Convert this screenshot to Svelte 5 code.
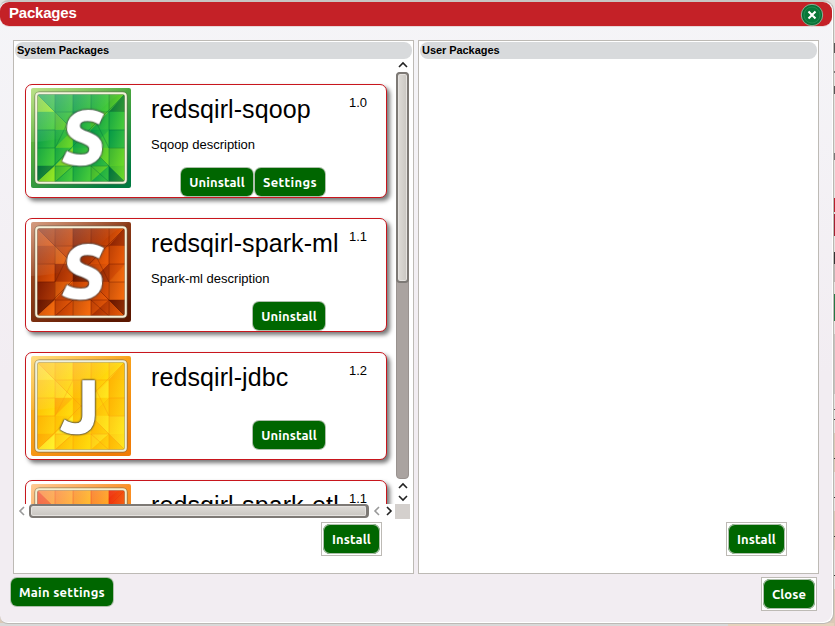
<script>
  const packages = [
    { name: 'redsqirl-sqoop', version: '1.0', description: 'Sqoop description', letter: 'S', theme: 'green', settings: true, height: 114 },
    { name: 'redsqirl-spark-ml', version: '1.1', description: 'Spark-ml description', letter: 'S', theme: 'brown', height: 114 },
    { name: 'redsqirl-jdbc', version: '1.2', description: '', letter: 'J', theme: 'yellow', height: 108, compact: true },
    { name: 'redsqirl-spark-etl', version: '1.1', description: '', letter: '', theme: 'orange', height: 114 }
  ];

  // border start / end, frame line, then six facet shades from light to dark
  const themes = {
    green: ['#8fcf3c', '#007a40', '#f3f3dc', '#8fe524', '#56d02c', '#22bd44', '#07a94c', '#038f48', '#00703c'],
    brown: ['#b75a2c', '#5b1700', '#f6f0d8', '#f2690d', '#e25206', '#cc4203', '#ad3002', '#8b1f02', '#631300'],
    yellow: ['#ffc62e', '#f07c06', '#eef0dc', '#fff02a', '#ffe018', '#ffd000', '#ffc000', '#ffb000', '#fb970c'],
    orange: ['#ffa64c', '#f57a00', '#f3efd0', '#ffc21c', '#ffad22', '#ff9a2a', '#fb8428', '#f76416', '#ee2d0c']
  };

  // Two shades for every cell of the 5 by 5 mosaic; letters index the shades
  const mosaics = {
    green: ['ad', 'dd', 'dd', 'cc', 'bf', 'cc', 'bc', 'dd', 'bd', 'cc', 'dd', 'cb', 'de', 'dc', 'dd', 'cc', 'ca', 'cd', 'db', 'bb', 'fa', 'bc', 'cc', 'bd', 'fb'],
    brown: ['ce', 'dd', 'ee', 'dd', 'be', 'dd', 'ac', 'ee', 'cb', 'bb', 'cc', 'dd', 'fd', 'be', 'ba', 'ee', 'ac', 'be', 'bc', 'aa', 'fa', 'bc', 'aa', 'bd', 'bf'],
    yellow: ['bd', 'cc', 'dd', 'cc', 'be', 'cc', 'bc', 'dd', 'cb', 'dd', 'cc', 'ec', 'dd', 'cd', 'dd', 'dd', 'ca', 'cd', 'db', 'bb', 'ea', 'bd', 'cc', 'bd', 'db'],
    orange: ['fd', 'cc', 'bb', 'cc', 'ff', 'dd', 'bc', 'bb', 'cd', 'ee', 'cc', 'cc', 'dd', 'cc', 'ee', 'dd', 'ba', 'cc', 'bb', 'dd', 'fa', 'dd', 'cc', 'dd', 'ff']
  };
  const stops = [6, 24, 42, 60, 78, 94];
  const facetsOf = (theme) =>
    mosaics[theme].flatMap((pair, n) => {
      const r = Math.floor(n / 5);
      const c = n % 5;
      const [x0, x1, y0, y1] = [stops[c], stops[c + 1], stops[r], stops[r + 1]];
      const points = r === c
        ? [`${x0},${y0} ${x0},${y1} ${x1},${y1}`, `${x0},${y0} ${x1},${y0} ${x1},${y1}`]
        : [`${x0},${y0} ${x1},${y0} ${x0},${y1}`, `${x1},${y0} ${x1},${y1} ${x0},${y1}`];
      const shade = (i) => pair.charCodeAt(i) - 94;
      if (pair[0] === pair[1]) return [{ points: `${x0},${y0} ${x1},${y0} ${x1},${y1} ${x0},${y1}`, shade: shade(0) }];
      return points.map((p, i) => ({ points: p, shade: shade(i) }));
    });
</script>

{#snippet tile(letter, theme)}
  {@const t = themes[theme]}
  <svg class="tile" viewBox="0 0 100 100">
    <defs>
      <linearGradient id="edge-{theme}" x1="0" y1="0" x2="0.75" y2="1">
        <stop offset="0" stop-color={t[0]} /><stop offset="1" stop-color={t[1]} />
      </linearGradient>
      <linearGradient id="shade-{theme}" x1="0" y1="0" x2="1" y2=".3">
        <stop offset="0" stop-color={t[8]} stop-opacity=".3" /><stop offset="1" stop-color={t[3]} stop-opacity=".3" />
      </linearGradient>
      <linearGradient id="gloss-{theme}" x1="0" y1="0" x2="1" y2=".8">
        <stop offset="0" stop-color="#fff" stop-opacity=".4" /><stop offset=".65" stop-color="#fff" stop-opacity="0" />
      </linearGradient>
    </defs>
    <rect width="100" height="100" rx="2" fill="url(#edge-{theme})" />
    {#each facetsOf(theme) as f}
      <polygon points={f.points} fill={t[f.shade]} stroke={t[f.shade]} stroke-width=".4" />
      <polygon points={f.points} fill="url(#shade-{theme})" />
    {/each}
    <path d="M6 6l88 88M94 6L6 94M24 24h54v54H24zM24 6v18M42 6v18M60 6v18M78 6v18M24 78v16M42 78v16M60 78v16M78 78v16M6 42h18M6 60h18M78 42h16M78 60h16M42 24l-18 36M60 24l18 36M60 78l18 16M42 78L24 94" fill="none" stroke={t[8]} stroke-opacity=".5" stroke-width=".8" />
    <path d="M0 0H100C72 12 64 34 42 47Q20 54 0 54Z" fill="url(#gloss-{theme})" />
    <rect x="5" y="5" width="90" height="90" rx="3.500" fill="none" stroke="#665" stroke-opacity=".5" stroke-width="3.600" />
    <rect x="5.200" y="5.200" width="89.600" height="89.600" rx="3" fill="none" stroke={t[2]} stroke-width="2" />
    {#if letter}
      <g transform={letter === 'S' ? 'translate(50.500 75.500) skewX(-6)' : 'translate(49 75.500)'}>
        <text class="halo" text-anchor="middle">{letter}</text>
      </g>
    {/if}
  </svg>
{/snippet}

{#snippet arrow(dir, faded)}
  <svg class="arrow" class:faded viewBox="0 0 12 12">
    <path d={{ up: 'M2 8l4-4 4 4', down: 'M2 4l4 4 4-4', left: 'M8 2L4 6l4 4', right: 'M4 2l4 4-4 4' }[dir]} />
  </svg>
{/snippet}

<div class="window">
  <header>
    <h1>Packages</h1>
    <button class="dismiss" aria-label="Close window">
      <svg viewBox="0 0 24 24">
        <defs><radialGradient id="orb"><stop offset="0" stop-color="#087532" /><stop offset=".8" stop-color="#08793b" /><stop offset="1" stop-color="#075c2a" /></radialGradient></defs>
        <circle cx="12" cy="12" r="10.700" fill="url(#orb)" stroke="#8bb497" />
        <circle cx="12" cy="12" r="8" fill="none" stroke="#329259" stroke-opacity=".6" />
        <path d="M8.500 8.500l7 7M15.500 8.500l-7 7" stroke="#fff" stroke-width="2.100" />
      </svg>
    </button>
  </header>

  <main>
    <section>
      <h2>System Packages</h2>
      <div class="scroller">
        <div class="row">
          <div class="list">
            {#each packages as p}
              <article class:compact={p.compact} style="height: {p.height}px">
                {@render tile(p.letter, p.theme)}
                <div class="info">
                  <div class="title"><h3>{p.name}</h3><span>{p.version}</span></div>
                  <p>{p.description}</p>
                  <div class="actions">
                    <button class="btn uninstall">Uninstall</button>{#if p.settings}<button class="btn settings">Settings</button>{/if}
                  </div>
                </div>
              </article>
            {/each}
          </div>
          <div class="vbar">
            {@render arrow('up')}
            <div class="vtrack"><div class="vthumb"></div></div>
            {@render arrow('up')}
            {@render arrow('down')}
          </div>
        </div>
        <div class="hbar">
          {@render arrow('left', true)}
          <div class="hthumb"></div>
          {@render arrow('left', true)}
          {@render arrow('right')}
          <div class="corner"></div>
        </div>
      </div>
      <div class="install"><span class="box"><button class="btn inst">Install</button></span></div>
    </section>
    <section>
      <h2>User Packages</h2>
      <div class="scroller"></div>
      <div class="install"><span class="box"><button class="btn inst">Install</button></span></div>
    </section>
  </main>

  <footer>
    <button class="btn main-settings">Main settings</button>
    <span class="box"><button class="btn close">Close</button></span>
  </footer>
</div>

<style>
  :global(body) {
    margin: 0;
    width: 835px;
    height: 626px;
    overflow: hidden;
    background:
      linear-gradient(90deg, #d9d9d9 0 728px, #e5d2bd 728px) 0 623px / 834px 3px no-repeat,
      linear-gradient(#e4e3e0 0 43px, #555 43px 53px, #e4e3e0 53px 71px, #777 71px 73px, #e4e3e0 73px 86px, #555 86px 94px, #e4e3e0 94px 153px, #777 153px 160px, #e4e3e0 160px 198px, #b71f2d 198px 212px, #ddd 212px 214px, #a31f31 214px 236px, #e4e3e0 236px 252px, #333 252px 264px, #bbb5b3 264px 282px, #e4e3e0 282px 294px, #267945 294px 321px, #e4e3e0 321px 334px, #c5c3bf 334px 394px, #e4e3e0 394px 409px, #555 409px 410px, #e4e3e0 410px 419px, #333 419px 420px, #e4e3e0 420px 433px, #dac9b7 433px 458px, #333 458px 459px, #dac9b7 459px 472px, #e4e3e0 472px 497px, #333 497px 498px, #e4e3e0 498px 511px, #dac9b7 511px 536px, #333 536px 537px, #dac9b7 537px 550px, #e4e3e0 550px 575px, #333 575px 576px, #e4e3e0 576px 589px, #dac9b7 589px);
    font-family: 'Liberation Sans', Arial, sans-serif;
    color: #000;
  }
  h1, h2, h3, p { margin: 0; }
  button { border: 0; padding: 0; margin: 0; }
  .window {
    box-sizing: border-box;
    width: 834px;
    height: 624px;
    display: flex;
    flex-direction: column;
    background: linear-gradient(#f5f5f8, #f2edf2 60%, #f2edf2);
    border-right: 1px solid #bab8b3;
    border-bottom: 1px solid #bdbab6;
    border-top: 2px solid #c8c5c2;
    border-radius: 8px 10px 10px 8px;
    box-shadow: inset -1px -1px #fff;
  }
  header {
    box-sizing: border-box;
    width: 832px;
    height: 24px;
    flex: none;
    display: flex;
    justify-content: space-between;
    padding: 0 8px 0 9px;
    background: #c42127;
    border-radius: 9px;
    box-shadow: 0 1px #e8d5d7;
  }
  h1 { font-size: 15px; line-height: 22px; color: #fff; letter-spacing: -.2px; }
  .dismiss { width: 24px; height: 24px; margin-top: 1px; background: none; }
  .dismiss svg { display: block; width: 24px; height: 24px; }
  main { display: flex; gap: 4px; padding: 14px 0 0 13px; }
  section {
    box-sizing: border-box;
    width: 401px;
    height: 534px;
    border: 1px solid #bdbab5;
    background: #fff;
    display: flex;
    flex-direction: column;
  }
  h2 {
    height: 17px;
    margin: 1px 1px 0;
    padding-left: 2px;
    font-size: 11px;
    line-height: 17px;
    letter-spacing: -.06px;
    background: #d8dadc;
    border-radius: 8px;
  }
  .scroller { height: 460px; }
  .row { display: flex; height: 445px; }
  .list {
    box-sizing: border-box;
    width: 381px;
    height: 445px;
    overflow: hidden;
    padding: 25px 0 0 11px;
    display: flex;
    flex-direction: column;
    gap: 20px;
  }
  article {
    box-sizing: border-box;
    width: 362px;
    flex: none;
    display: flex;
    padding: 3px 5px;
    border: 1px solid #c8161d;
    border-radius: 7px;
    background: #fff;
    box-shadow: 3px 3px 4px #777;
  }
  .tile { width: 100px; height: 100px; flex: none; }
  .halo {
    font: 700 73px Ubuntu, 'Open Sans', sans-serif;
    fill: #fff;
    stroke: #fff;
    stroke-width: 2.5;
    filter: drop-shadow(0 0 1px #333) drop-shadow(0 0 .5px #555);
  }
  .info { width: 216px; margin-left: 20px; display: flex; flex-direction: column; }
  .title { display: flex; flex: none; justify-content: space-between; white-space: nowrap; height: 46px; }
  h3 { font-size: 25px; font-weight: 400; line-height: 43px; letter-spacing: .09px; }
  .title span { font-size: 13px; line-height: 29px; }
  p { height: 24px; flex: none; font-size: 13px; line-height: 22px; }
  .actions { display: flex; flex: none; justify-content: flex-end; gap: 2px; padding: 9px 42px 0 0; }
  .compact .actions { padding-top: 0; margin-top: -4px; }
  .compact .title { height: 44px; }
  .btn {
    box-sizing: border-box;
    height: 28px;
    flex: none;
    display: block;
    background: #060;
    color: #fff;
    border-radius: 6px;
    box-shadow: 0 0 0 1px #aebfab;
    font: 700 13px/29px Ubuntu, 'Noto Sans', 'Open Sans', sans-serif;
    text-align: center;
    white-space: nowrap;
  }
  .actions .btn { margin-top: 1px; }
  .uninstall { width: 72px; letter-spacing: .12px; }
  .settings { width: 70px; letter-spacing: .35px; }
  .inst { width: 57px; height: 30px; letter-spacing: .12px; }
  .main-settings { width: 102px; letter-spacing: .25px; }
  .close { width: 52px; height: 30px; letter-spacing: .1px; }
  .vbar { width: 15px; display: flex; flex-direction: column; align-items: center; }
  .arrow { width: 12px; height: 12px; flex: none; fill: none; stroke: #222; stroke-width: 1.6; }
  .faded { stroke: #999; }
  .vtrack { box-sizing: border-box; width: 13px; height: 407px; flex: none; margin-top: 1px; border-radius: 4px; background: #aaa3a0; border: 1px solid #99928f; margin-bottom: 1px; }
  .vthumb {
    box-sizing: border-box;
    width: 13px;
    height: 211px;
    margin: -1px;
    border: 2px solid #7d7975;
    border-radius: 4px;
    background: linear-gradient(90deg, #dedbd7, #c9c6c1);
    box-shadow: inset 0 0 0 1px #e5e2df;
  }
  .hbar { display: flex; align-items: center; height: 15px; padding-left: 2px; }
  .hthumb {
    box-sizing: border-box;
    width: 340px;
    height: 14px;
    margin: -1px 2px 0 1px;
    border: 2px solid #7d7975;
    border-right-width: 3px;
    border-radius: 4px;
    background: linear-gradient(#dedbd7, #c9c6c1);
    box-shadow: inset 0 0 0 1px #e5e2df;
  }
  .hbar .arrow { margin-top: -2px; }
  .corner { width: 15px; height: 15px; background: #d4d0cd; }
  .install { display: flex; justify-content: flex-end; padding: 3px 31px 0 0; }
  .box { display: block; padding: 1px; border: 1px solid #bdbab5; background: #fff; }
  .box .btn { box-shadow: inset 0 0 0 1px #aebfab; line-height: 30px; border-radius: 7px; }
  footer { display: flex; justify-content: space-between; align-items: flex-start; padding: 3px 16px 0 11px; }
  footer > .btn { margin-top: 1px; }
</style>
